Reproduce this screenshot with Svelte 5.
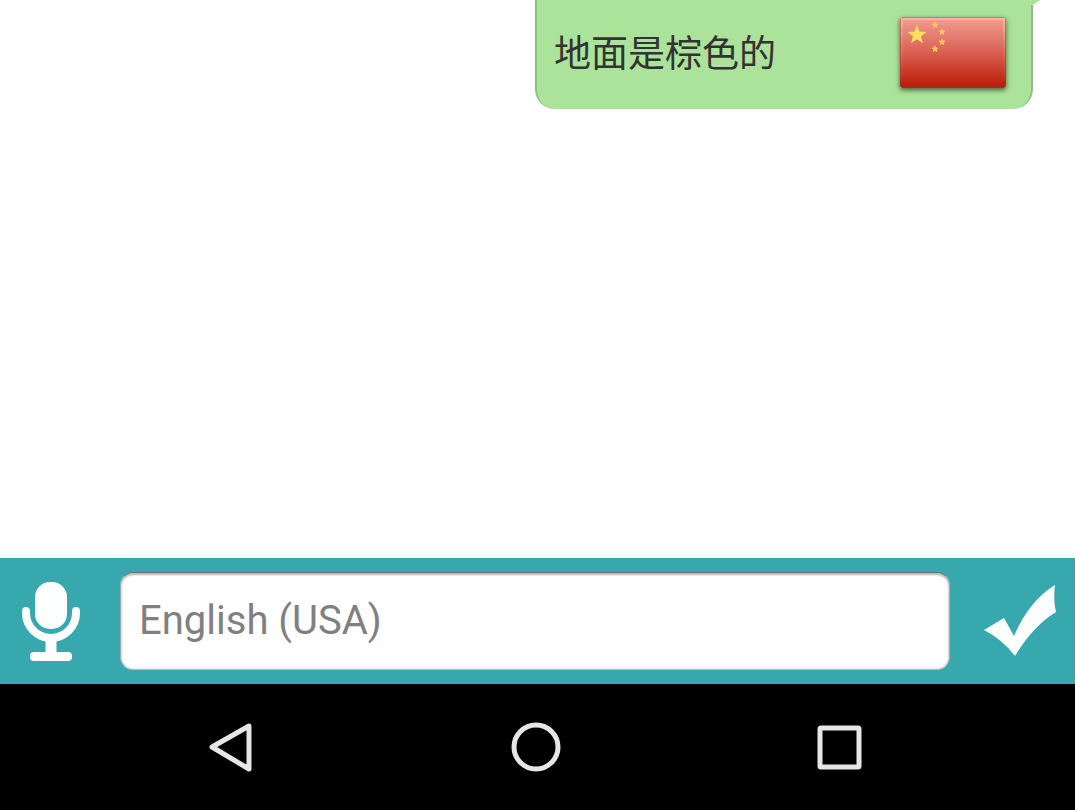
<script>
  let message = $state('');
  const messages = [{ text: '地面是棕色的', lang: 'zh-CN' }];
  const star = (cx, cy, r) =>
    Array.from({ length: 10 }, (_, i) => {
      const d = i % 2 ? r * 0.42 : r;
      const a = (Math.PI * i) / 5 - Math.PI / 2;
      return `${cx + d * Math.cos(a)},${cy + d * Math.sin(a)}`;
    }).join(' ');
  const smallStars = [
    [35, 8],
    [42, 15],
    [42, 25],
    [35, 32]
  ];
</script>

<div class="screen">
  <main class="chat">
    {#each messages as item}
      <article class="bubble">
        <p lang={item.lang}>{item.text}</p>
        <svg class="flag" viewBox="0 0 106 71" role="img" aria-label="中国">
          <defs>
            <linearGradient id="red" x1="0" y1="0" x2="0" y2="1">
              <stop offset="0" stop-color="#f09b8f" />
              <stop offset="0.45" stop-color="#dc6659" />
              <stop offset="0.93" stop-color="#c02613" />
              <stop offset="1" stop-color="#b4210f" />
            </linearGradient>
            <linearGradient id="edge" x1="0" y1="0" x2="0" y2="1">
              <stop offset="0" stop-color="#f6b5a8" />
              <stop offset="0.6" stop-color="#d95a49" />
              <stop offset="1" stop-color="#b4210f" />
            </linearGradient>
            <linearGradient id="rim" x1="0" y1="0" x2="0" y2="1">
              <stop offset="0" stop-color="#d6776a" />
              <stop offset="1" stop-color="#a92a18" />
            </linearGradient>
          </defs>
          <rect width="106" height="71" rx="2" fill="url(#rim)" />
          <rect x="2" y="2" width="102" height="67" fill="url(#red)" stroke="url(#edge)" stroke-width="2" />
          <polygon points={star(17, 18, 10)} fill="#fde15c" />
          {#each smallStars as [x, y]}
            <polygon points={star(x, y, 3)} fill="#f8c65b" stroke="#f8c65b" stroke-width="1" stroke-linejoin="round" />
          {/each}
        </svg>
        <svg class="tail" viewBox="0 0 12 5" aria-hidden="true">
          <path d="M0 0H10Q5 2 2 5H0Z" fill="#abe39b" />
        </svg>
      </article>
    {/each}
  </main>

  <form class="composer" onsubmit={(e) => e.preventDefault()}>
    <button class="voice" type="button" aria-label="Voice input">
      <svg width="60" height="82" viewBox="0 0 60 82">
        <rect x="14" y="2" width="32" height="47" rx="15" fill="#fdffff" />
        <path d="M5 31V33A25 25 0 0 0 55 33V31" fill="none" stroke="#fdffff" stroke-width="8" stroke-linecap="round" />
        <path d="M30 58V76" stroke="#fdffff" stroke-width="11" />
        <rect x="9" y="72" width="42" height="9" rx="4" fill="#fdffff" />
      </svg>
    </button>
    <input type="text" aria-label="Message" placeholder="English (USA)" bind:value={message} />
    <button class="send" type="submit" aria-label="Send">
      <svg width="74" height="74" viewBox="0 0 74 74">
        <path d="M1 46L21 34L31 52Q46 17 72 1Q70 17 73 28Q50 42 32 72Q19 55 1 46Z" fill="#fdffff" />
      </svg>
    </button>
  </form>

  <nav class="system" aria-label="System">
    <button type="button" aria-label="Back">
      <svg width="50" height="50" viewBox="0 0 50 50"><path d="M42 4V47L5 25Z" /></svg>
    </button>
    <button type="button" aria-label="Home">
      <svg width="50" height="50" viewBox="0 0 50 50"><circle cx="25" cy="25" r="22" /></svg>
    </button>
    <button type="button" aria-label="Recent apps">
      <svg width="50" height="50" viewBox="0 0 50 50"><rect x="5" y="6" width="39" height="39" rx="1" /></svg>
    </button>
  </nav>
</div>

<style>
  .screen {
    display: flex;
    flex-direction: column;
    min-height: 100vh;
    background: #fff;
    font-family: Roboto, "Noto Sans CJK SC", sans-serif;
  }
  .chat {
    flex: 1;
    display: flex;
    flex-direction: column;
    align-items: flex-end;
    padding-right: 42px;
    border-bottom: 4px solid #f9f9f9;
  }
  .bubble {
    position: relative;
    box-sizing: border-box;
    display: flex;
    align-items: center;
    justify-content: space-between;
    width: 100%;
    max-width: 498px;
    padding: 17px 25px 21px 17px;
    border: solid #8fbf85;
    border-width: 0 2px;
    border-radius: 0 0 20px 20px;
    background: #abe39b;
  }
  .bubble p {
    margin: 0;
    padding-bottom: 4px;
    font-family: "Noto Sans CJK SC", sans-serif;
    font-size: 37px;
    line-height: 54px;
    color: #333;
  }
  .flag {
    width: 106px;
    height: 71px;
    border-radius: 2px;
    box-shadow: 0 2px 5px rgb(40 60 30 / 80%);
  }
  .tail {
    position: absolute;
    top: 0;
    right: -12px;
    width: 12px;
    height: 5px;
  }
  button {
    display: flex;
    align-items: center;
    justify-content: center;
    padding: 0;
    border: 0;
    background: none;
    cursor: pointer;
  }
  .composer {
    display: flex;
    align-items: center;
    box-sizing: border-box;
    height: 126px;
    background: #38a8af;
  }
  .voice {
    padding: 0 39px 0 21px;
  }
  .send {
    padding: 0 18px 0 33px;
  }
  .composer input {
    box-sizing: border-box;
    flex: 1;
    min-width: 0;
    height: 98px;
    padding: 0 18px 2px;
    border: 1px solid #7d979b;
    border-color: #62777c #8fb0b4 #a9c6c9;
    border-radius: 13px;
    background: #fff;
    box-shadow: inset 0 2px 2px #bbb4b8, inset 0 0 3px #ccc;
    font: 40px Roboto, "Noto Sans CJK SC", sans-serif;
    color: #333;
    outline: 0;
  }
  .composer input::placeholder {
    color: #808080;
    opacity: 1;
  }
  .system {
    display: flex;
    justify-content: center;
    gap: 254px;
    height: 126px;
    padding-right: 4px;
    background: #000;
  }
  .system path,
  .system circle,
  .system rect {
    fill: none;
    stroke: #e6e6e6;
    stroke-width: 5;
    stroke-linejoin: round;
  }
</style>
